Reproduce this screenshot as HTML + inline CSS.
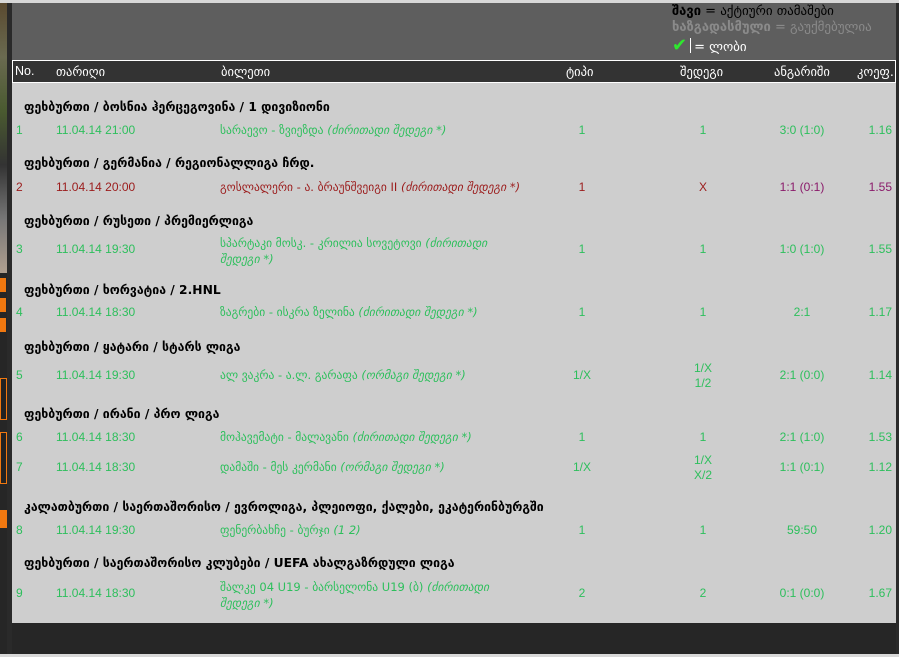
<!DOCTYPE html>
<html><head><meta charset="utf-8"><style>
*{margin:0;padding:0;box-sizing:border-box}
body{width:899px;height:657px;overflow:hidden;background:#262626;font-family:"Liberation Sans","DejaVu Sans",sans-serif;position:relative}
.a{position:absolute;white-space:nowrap}
.g{color:#2dbf5c;font-size:12px}
.r{color:#9b1b1b;font-size:12px}
.t{color:#000;font-weight:bold;font-size:12.3px;font-family:"DejaVu Sans","Liberation Sans",sans-serif}
.tk{font-family:"DejaVu Sans",sans-serif;font-size:11.5px}
.c{text-align:center;width:80px}
.rt{text-align:right;width:60px}
i{font-style:italic}
.h{color:#fff;font-size:12.5px;top:64px;font-family:"DejaVu Sans","Liberation Sans",sans-serif}
</style></head><body>
<div class="a" style="left:0;top:0;width:899px;height:3px;background:#d8d8d8"></div>
<div class="a" style="left:0;top:3px;width:7px;height:270px;background:linear-gradient(#5a4a30,#6a6a50 20%,#4a5a30 40%,#333 60%,#777 80%,#b0a090)"></div>
<div class="a" style="left:7px;top:3px;width:5px;height:654px;background:#2a2a2a"></div>
<div class="a" style="left:0;top:278px;width:6px;height:14px;background:#f07810"></div>
<div class="a" style="left:0;top:298px;width:6px;height:14px;background:#f07810"></div>
<div class="a" style="left:0;top:318px;width:6px;height:14px;background:#f07810"></div>
<div class="a" style="left:0;top:378px;width:7px;height:42px;border:1px solid #f07810;background:#222"></div>
<div class="a" style="left:0;top:432px;width:7px;height:52px;border:1px solid #f07810;background:#222"></div>
<div class="a" style="left:0;top:510px;width:7px;height:18px;background:#f07810"></div>
<div class="a" style="left:896px;top:3px;width:3px;height:654px;background:#2a2a2a"></div>
<div class="a" style="left:12px;top:3px;width:884px;height:57px;background:#5e5e5e"></div>
<div class="a" style="left:672px;top:4px;font-size:13px;color:#000;font-family:'DejaVu Sans',sans-serif"><b>შავი</b> = აქტიური თამაშები</div>
<div class="a" style="left:672px;top:20px;font-size:13px;color:#8a8a8a;font-family:'DejaVu Sans',sans-serif"><b>ხაზგადასმული</b> = გაუქმებულია</div>
<div class="a" style="left:672px;top:35px;font-size:13px;color:#fff;font-family:'DejaVu Sans',sans-serif"><span style="color:#2ee82e;font-size:18px;font-weight:bold">✔</span><span style="display:inline-block;width:1px;height:15px;background:#fff;margin:0 3px;vertical-align:-2px"></span>= ლობი</div>
<div class="a" style="left:12px;top:60px;width:884px;height:23px;background:#333;border:1px solid #fff"></div>
<div class="a h" style="left:15px;font-family:'Liberation Sans',sans-serif">No.</div>
<div class="a h" style="left:56px">თარიღი</div>
<div class="a h" style="left:221px">ბილეთი</div>
<div class="a h" style="left:566px">ტიპი</div>
<div class="a h" style="left:680px">შედეგი</div>
<div class="a h" style="left:774px">ანგარიში</div>
<div class="a h" style="left:857px">კოეფ.</div>
<div class="a" style="left:12px;top:83px;width:884px;height:540px;background:#cecece"></div>

<div class="a t" style="left:24px;top:100px">ფეხბურთი / ბოსნია ჰერცეგოვინა / 1 დივიზიონი</div>
<div class="a g" style="left:16px;top:123px">1</div><div class="a g" style="left:56px;top:123px">11.04.14 21:00</div>
<div class="a g tk" style="left:220px;top:123px">სარაევო - ზვიეზდა <i>(ძირითადი შედეგი *)</i></div>
<div class="a g c" style="left:542px;top:123px">1</div><div class="a g c" style="left:663px;top:123px">1</div><div class="a g c" style="left:762px;top:123px">3:0 (1:0)</div><div class="a g rt" style="left:832px;top:123px">1.16</div>

<div class="a t" style="left:24px;top:156px">ფეხბურთი / გერმანია / რეგიონალლიგა ჩრდ.</div>
<div class="a r" style="left:16px;top:180px">2</div><div class="a r" style="left:56px;top:180px">11.04.14 20:00</div>
<div class="a r tk" style="left:220px;top:180px">გოსლალერი - ა. ბრაუნშვეიგი II <i>(ძირითადი შედეგი *)</i></div>
<div class="a r c" style="left:542px;top:180px">1</div><div class="a r c" style="left:663px;top:180px">X</div><div class="a c" style="left:762px;top:180px;color:#8a1a6a;font-size:12px">1:1 (0:1)</div><div class="a rt" style="left:832px;top:180px;color:#8a1a6a;font-size:12px">1.55</div>

<div class="a t" style="left:24px;top:214px">ფეხბურთი / რუსეთი / პრემიერლიგა</div>
<div class="a g" style="left:16px;top:242px">3</div><div class="a g" style="left:56px;top:242px">11.04.14 19:30</div>
<div class="a g tk" style="left:220px;top:235px;line-height:16px">სპარტაკი მოსკ. - კრილია სოვეტოვი <i>(ძირითადი<br>შედეგი *)</i></div>
<div class="a g c" style="left:542px;top:242px">1</div><div class="a g c" style="left:663px;top:242px">1</div><div class="a g c" style="left:762px;top:242px">1:0 (1:0)</div><div class="a g rt" style="left:832px;top:242px">1.55</div>

<div class="a t" style="left:24px;top:283px">ფეხბურთი / ხორვატია / 2.HNL</div>
<div class="a g" style="left:16px;top:305px">4</div><div class="a g" style="left:56px;top:305px">11.04.14 18:30</div>
<div class="a g tk" style="left:220px;top:305px">ზაგრები - ისკრა ზელინა <i>(ძირითადი შედეგი *)</i></div>
<div class="a g c" style="left:542px;top:305px">1</div><div class="a g c" style="left:663px;top:305px">1</div><div class="a g c" style="left:762px;top:305px">2:1</div><div class="a g rt" style="left:832px;top:305px">1.17</div>

<div class="a t" style="left:24px;top:340px">ფეხბურთი / ყატარი / სტარს ლიგა</div>
<div class="a g" style="left:16px;top:368px">5</div><div class="a g" style="left:56px;top:368px">11.04.14 19:30</div>
<div class="a g tk" style="left:220px;top:368px">ალ ვაკრა - ა.ლ. გარაფა <i>(ორმაგი შედეგი *)</i></div>
<div class="a g c" style="left:542px;top:368px">1/X</div><div class="a g c" style="left:663px;top:361px;line-height:15px">1/X<br>1/2</div><div class="a g c" style="left:762px;top:368px">2:1 (0:0)</div><div class="a g rt" style="left:832px;top:368px">1.14</div>

<div class="a t" style="left:24px;top:407px">ფეხბურთი / ირანი / პრო ლიგა</div>
<div class="a g" style="left:16px;top:430px">6</div><div class="a g" style="left:56px;top:430px">11.04.14 18:30</div>
<div class="a g tk" style="left:220px;top:430px">მოჰავემატი - მალავანი <i>(ძირითადი შედეგი *)</i></div>
<div class="a g c" style="left:542px;top:430px">1</div><div class="a g c" style="left:663px;top:430px">1</div><div class="a g c" style="left:762px;top:430px">2:1 (1:0)</div><div class="a g rt" style="left:832px;top:430px">1.53</div>
<div class="a g" style="left:16px;top:460px">7</div><div class="a g" style="left:56px;top:460px">11.04.14 18:30</div>
<div class="a g tk" style="left:220px;top:460px">დამაში - მეს კერმანი <i>(ორმაგი შედეგი *)</i></div>
<div class="a g c" style="left:542px;top:460px">1/X</div><div class="a g c" style="left:663px;top:453px;line-height:15px">1/X<br>X/2</div><div class="a g c" style="left:762px;top:460px">1:1 (0:1)</div><div class="a g rt" style="left:832px;top:460px">1.12</div>

<div class="a t" style="left:24px;top:500px">კალათბურთი / საერთაშორისო / ევროლიგა, პლეიოფი, ქალები, ეკატერინბურგში</div>
<div class="a g" style="left:16px;top:523px">8</div><div class="a g" style="left:56px;top:523px">11.04.14 19:30</div>
<div class="a g tk" style="left:220px;top:523px">ფენერბახჩე - ბურჯი <i>(1 2)</i></div>
<div class="a g c" style="left:542px;top:523px">1</div><div class="a g c" style="left:663px;top:523px">1</div><div class="a g c" style="left:762px;top:523px">59:50</div><div class="a g rt" style="left:832px;top:523px">1.20</div>

<div class="a t" style="left:24px;top:556px">ფეხბურთი / საერთაშორისო კლუბები / UEFA ახალგაზრდული ლიგა</div>
<div class="a g" style="left:16px;top:586px">9</div><div class="a g" style="left:56px;top:586px">11.04.14 18:30</div>
<div class="a g tk" style="left:220px;top:579px;line-height:16px">შალკე 04 U19 - ბარსელონა U19 (ბ) <i>(ძირითადი<br>შედეგი *)</i></div>
<div class="a g c" style="left:542px;top:586px">2</div><div class="a g c" style="left:663px;top:586px">2</div><div class="a g c" style="left:762px;top:586px">0:1 (0:0)</div><div class="a g rt" style="left:832px;top:586px">1.67</div>
<div class="a" style="left:0;top:654px;width:899px;height:3px;background:#d8d8d8"></div>
</body></html>
